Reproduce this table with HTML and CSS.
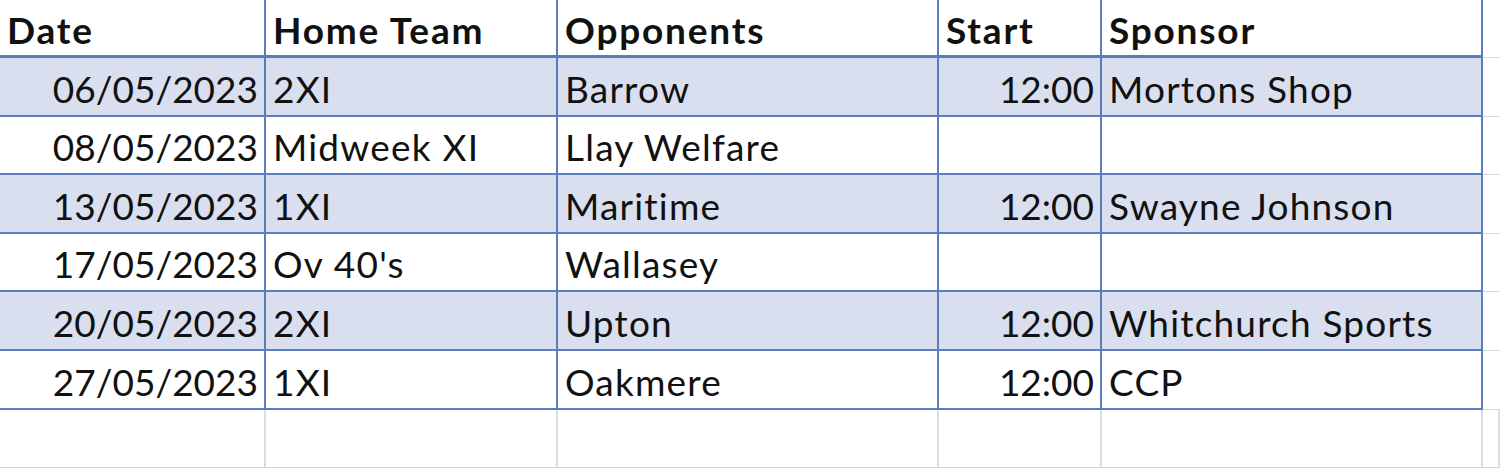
FILE: index.html
```html
<!DOCTYPE html>
<html lang="en">
<head>
<meta charset="utf-8">
<title>Fixtures</title>
<link rel="stylesheet" href="styles.css">
</head>
<body>
<div class="sheet">
  <div class="row head">
    <div class="cell">Date</div>
    <div class="cell">Home Team</div>
    <div class="cell">Opponents</div>
    <div class="cell">Start</div>
    <div class="cell">Sponsor</div>
    <div class="cell out"></div>
  </div>
  <div class="row band">
    <div class="cell num">06/05/2023</div>
    <div class="cell">2XI</div>
    <div class="cell">Barrow</div>
    <div class="cell num">12:00</div>
    <div class="cell">Mortons Shop</div>
    <div class="cell out"></div>
  </div>
  <div class="row">
    <div class="cell num">08/05/2023</div>
    <div class="cell">Midweek XI</div>
    <div class="cell">Llay Welfare</div>
    <div class="cell num"></div>
    <div class="cell"></div>
    <div class="cell out"></div>
  </div>
  <div class="row band">
    <div class="cell num">13/05/2023</div>
    <div class="cell">1XI</div>
    <div class="cell">Maritime</div>
    <div class="cell num">12:00</div>
    <div class="cell">Swayne Johnson</div>
    <div class="cell out"></div>
  </div>
  <div class="row">
    <div class="cell num">17/05/2023</div>
    <div class="cell">Ov 40's</div>
    <div class="cell">Wallasey</div>
    <div class="cell num"></div>
    <div class="cell"></div>
    <div class="cell out"></div>
  </div>
  <div class="row band">
    <div class="cell num">20/05/2023</div>
    <div class="cell">2XI</div>
    <div class="cell">Upton</div>
    <div class="cell num">12:00</div>
    <div class="cell">Whitchurch Sports</div>
    <div class="cell out"></div>
  </div>
  <div class="row">
    <div class="cell num">27/05/2023</div>
    <div class="cell">1XI</div>
    <div class="cell">Oakmere</div>
    <div class="cell num">12:00</div>
    <div class="cell">CCP</div>
    <div class="cell out"></div>
  </div>
  <div class="row empty">
    <div class="cell"></div>
    <div class="cell"></div>
    <div class="cell"></div>
    <div class="cell"></div>
    <div class="cell"></div>
    <div class="cell out"></div>
  </div>
</div>
</body>
</html>
```

FILE: styles.css
```css
html, body {
  margin: 0;
  padding: 0;
  background: #ffffff;
}

.sheet {
  width: 1500px;
  height: 468px;
  overflow: hidden;
  font-family: Lato, "Open Sans", sans-serif;
  font-size: 37px;
  color: #111111;
}

.row {
  display: grid;
  grid-template-columns: 266px 292px 381px 163px 381px 1fr;
  height: 58.6px;
  box-sizing: border-box;
}

.row.head {
  height: 58px;
  font-weight: bold;
}

.cell {
  box-sizing: border-box;
  display: flex;
  align-items: flex-end;
  padding: 0 6px 8px 7px;
  line-height: 1;
  white-space: nowrap;
  letter-spacing: 1.2px;
  border-right: 2px solid #5b7dbe;
  border-bottom: 2px solid #5b7dbe;
}

.head .cell {
  border-bottom-width: 3px;
  padding-bottom: 7px;
  letter-spacing: 1.8px;
}

.cell.num {
  justify-content: flex-end;
  letter-spacing: 0;
  padding-right: 6px;
}

.band .cell {
  background: #d9dfef;
}

.cell.out,
.band .cell.out {
  background: #ffffff;
  border-right: none;
  border-bottom: 1px solid #d9d9d9;
}

.empty .cell {
  border-right: 2px solid #dcdcdc;
  border-bottom: 1px solid #d6d6d6;
}
```
